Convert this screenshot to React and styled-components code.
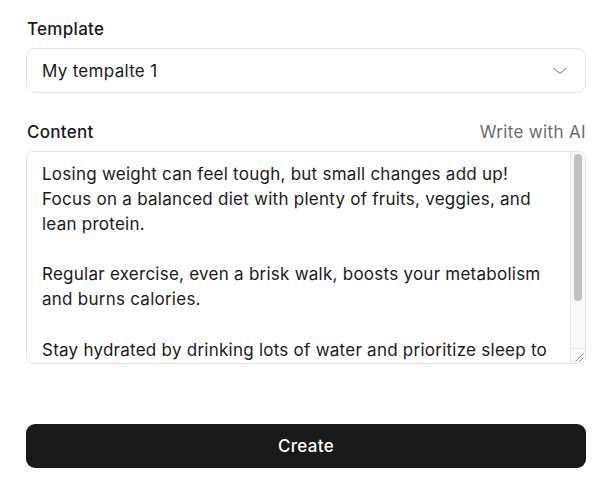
import React from "react";
import styled, { createGlobalStyle } from "styled-components";

const Global = createGlobalStyle`
  html, body { margin: 0; padding: 0; background: #fff; }
  body { font-family: Inter, "Noto Sans", sans-serif; color: #1a1a1a; }
  * { box-sizing: border-box; }
`;

const Page = styled.div`
  padding: 17px 24px 0 26px;
  width: 610px;
  display: flex;
  flex-direction: column;
`;

const Field = styled.div`
  display: flex;
  flex-direction: column;
  gap: 7px;
  margin-bottom: ${(p) => p.$mb || 0}px;
`;

const LabelRow = styled.div`
  display: flex;
  justify-content: space-between;
  align-items: center;
  height: 24px;
`;

const Label = styled.label`
  font-size: 17px;
  letter-spacing: 0.3px;
  font-weight: 500;
  line-height: 24px;
  color: #1a1a1a;
  padding-left: 1px;
`;

const Link = styled.span`
  font-size: 17px;
  letter-spacing: 0.35px;
  line-height: 24px;
  color: #6b6b6b;
`;

const Select = styled.div`
  height: 45px;
  border: 1px solid #e3e3e3;
  border-radius: 9px;
  display: flex;
  align-items: center;
  justify-content: space-between;
  padding: 0 13px 0 15px;
  font-size: 17px;
  letter-spacing: 0.3px;
  color: #1a1a1a;
`;

const TextWrap = styled.div`
  position: relative;
  height: 213px;
`;

const TextArea = styled.textarea`
  display: block;
  width: 100%;
  height: 100%;
  border: 1px solid #e3e3e3;
  border-radius: 7px;
  padding: 10px 30px 10px 15px;
  font-family: Inter, "Noto Sans", sans-serif;
  font-size: 17px;
  letter-spacing: 0.25px;
  line-height: 25.1px;
  color: #1a1a1a;
  resize: none;
  outline: none;
  overflow: hidden;
  scrollbar-width: none;
`;

const ScrollTrack = styled.div`
  position: absolute;
  top: 1px;
  right: 1px;
  bottom: 16px;
  width: 15px;
  background: #f8f8f8;
  border-left: 1px solid #e6e6e6;
  border-top-right-radius: 6px;
`;

const ScrollThumb = styled.div`
  position: absolute;
  top: 2px;
  left: 3px;
  width: 8px;
  height: 147px;
  border-radius: 4px;
  background: #c1c1c1;
`;

const Corner = styled.div`
  position: absolute;
  right: 1px;
  bottom: 1px;
  width: 15px;
  height: 15px;
  background: #f8f8f8;
  border-left: 1px solid #e6e6e6;
  border-top: 1px solid #e6e6e6;
  border-bottom-right-radius: 6px;
  display: flex;
`;

const Button = styled.button`
  margin-top: 60px;
  height: 44px;
  border: none;
  border-radius: 9px;
  background: #1a1a1a;
  color: #fff;
  font-family: Inter, "Noto Sans", sans-serif;
  font-size: 17px;
  letter-spacing: 0.3px;
  font-weight: 500;
`;

const text = `Losing weight can feel tough, but small changes add up! Focus on a balanced diet with plenty of fruits, veggies, and lean protein.

Regular exercise, even a brisk walk, boosts your metabolism and burns calories.

Stay hydrated by drinking lots of water and prioritize sleep to help your body recover and stay on track.`;

export default function App() {
  return (
    <>
      <Global />
      <Page>
        <Field $mb={27}>
          <LabelRow>
            <Label>Template</Label>
          </LabelRow>
          <Select>
            <span>My tempalte 1</span>
            <svg width="24" height="24" viewBox="0 0 24 24" fill="none" stroke="#a8a8a8" strokeWidth="1.3" strokeLinecap="round" strokeLinejoin="round">
              <path d="M6 9.5 12 14.5 18 9.5" />
            </svg>
          </Select>
        </Field>
        <Field>
          <LabelRow>
            <Label>Content</Label>
            <Link>Write with AI</Link>
          </LabelRow>
          <TextWrap>
            <TextArea defaultValue={text} />
            <ScrollTrack>
              <ScrollThumb />
            </ScrollTrack>
            <Corner>
              <svg width="14" height="14" viewBox="0 0 14 14" fill="none" stroke="#8a8a8a" strokeWidth="1">
                <path d="M12.5 4.5 4.5 12.5" />
                <path d="M12.5 8.5 8.5 12.5" />
              </svg>
            </Corner>
          </TextWrap>
        </Field>
        <Button>Create</Button>
      </Page>
    </>
  );
}
